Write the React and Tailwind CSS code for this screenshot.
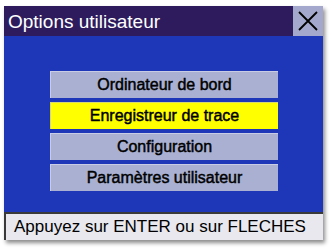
export default function App() {
  const items = [
    { label: "Ordinateur de bord", active: false },
    { label: "Enregistreur de trace", active: true },
    { label: "Configuration", active: false },
    { label: "Paramètres utilisateur", active: false },
  ];

  return (
    <div
      className="w-[332px] h-[251px] bg-white pt-[6px] pl-[4px]"
      style={{ fontFamily: '"Liberation Sans", Arial, sans-serif' }}
    >
      <div className="w-[319px] flex flex-col shadow-[2px_3px_4px_rgba(0,0,0,0.45)]">
        {/* Title bar */}
        <div className="h-[30px] flex bg-[#2d1b5e]">
          <div className="flex-1 flex items-center pl-[4px] text-white text-[19px] leading-none">
            Options utilisateur
          </div>
          <div className="w-[30px] flex items-center justify-center bg-[#a4a8cc]">
            <svg width="22" height="22" viewBox="0 0 22 22">
              <path d="M2 2 L20 20 M20 2 L2 20" stroke="#000" strokeWidth="1.8" />
            </svg>
          </div>
        </div>

        {/* Menu */}
        <div className="h-[176px] bg-[#1e36b8] pt-[35px] pl-[46px] flex flex-col gap-[4px]">
          {items.map(({ label, active }) => (
            <div
              key={label}
              className={`w-[228px] h-[27px] flex items-center justify-center text-[16px] text-black border-t border-l ${
                active
                  ? "bg-[#ffff00] border-[#d8d870]"
                  : "bg-[#a9b0d2] border-[#c8cce4]"
              }`}
            >
              <span className="[-webkit-text-stroke:0.45px_black]">{label}</span>
            </div>
          ))}
        </div>

        {/* Status bar */}
        <div className="h-[28px] bg-[#e8e8ee] border-t-2 border-l-2 border-[#3a3a3a] flex items-center pl-[8px] text-black text-[17px]">
          Appuyez sur ENTER ou sur FLECHES
        </div>
      </div>
    </div>
  );
}
